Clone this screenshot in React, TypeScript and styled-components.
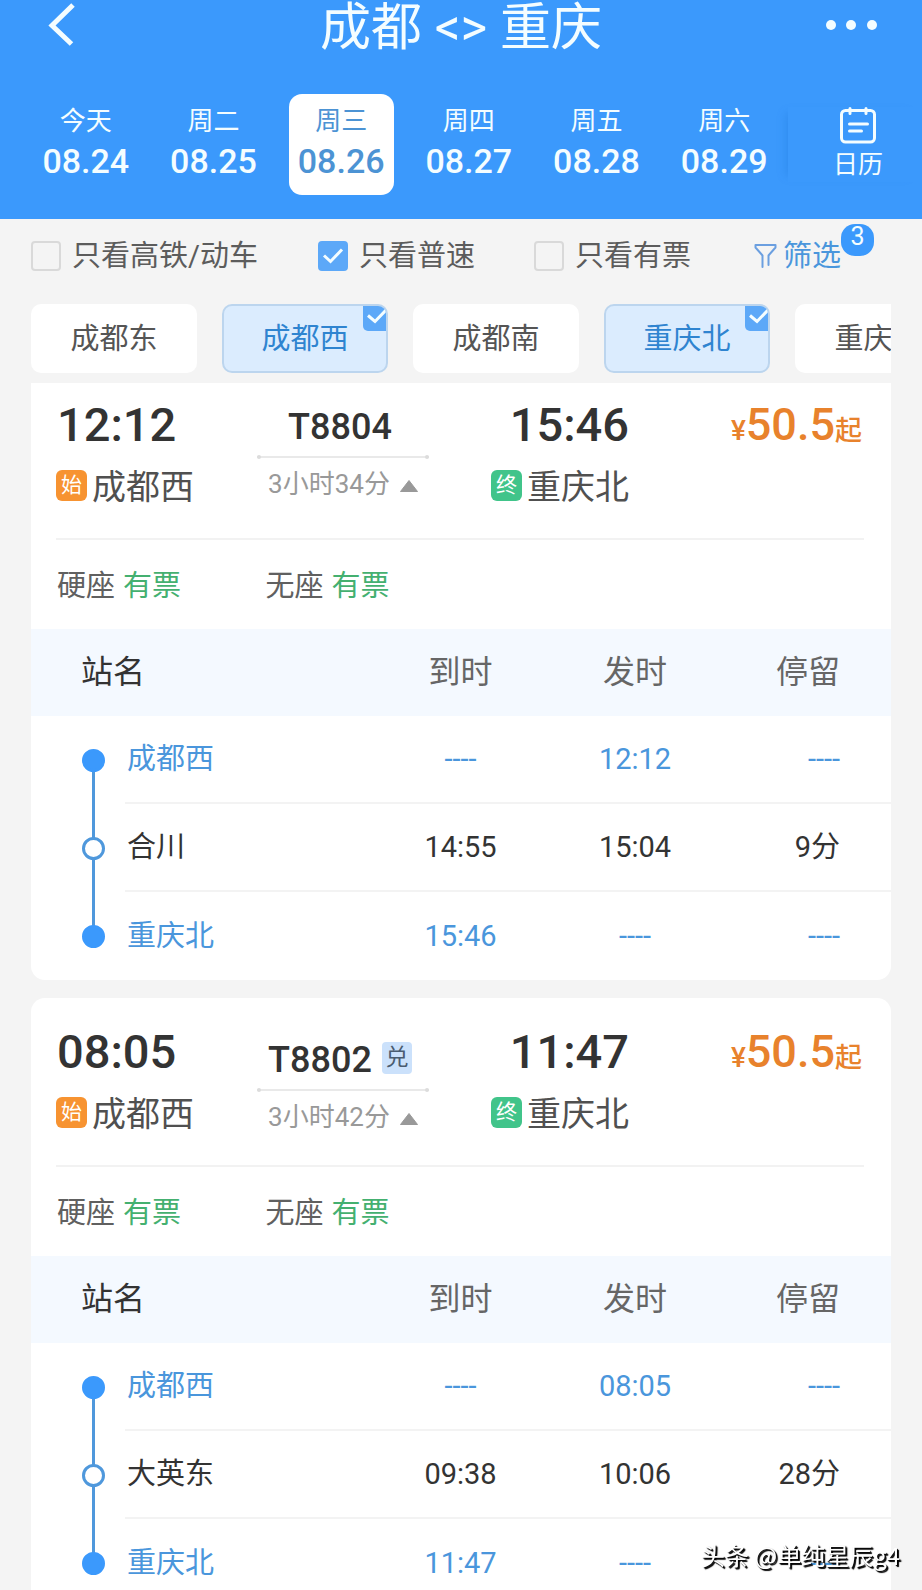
import React, { useState } from 'react';
import styled, { createGlobalStyle, css } from 'styled-components';

const BLUE = '#3b99fc';
const LINK = '#4a96dc';

const GlobalStyle = createGlobalStyle`
  * { box-sizing: border-box; }
  body {
    margin: 0;
    background: #f4f4f4;
    color: #333;
    font-family: Roboto, "Noto Sans CJK SC", sans-serif;
  }
  button {
    margin: 0;
    padding: 0;
    border: 0;
    background: none;
    color: inherit;
    font: inherit;
    cursor: pointer;
  }
`;

const Screen = styled.div`
  height: 100vh;
  display: flex;
  flex-direction: column;
  overflow: hidden;
`;

const Header = styled.header`
  flex: none;
  background: ${BLUE};
  color: #f4fdff;
  padding-bottom: 24px;
`;

const TitleBar = styled.div`
  display: grid;
  grid-template-columns: 100px 1fr 100px;
  align-items: start;
  margin-bottom: 38px;
`;

const Title = styled.h1`
  margin: 0;
  font-size: 51px;
  line-height: 56px;
  font-weight: 400;
  text-align: center;
`;

const BackButton = styled.button`
  height: 50px;
  padding-left: 48px;
  svg { display: block; }
`;

const MoreButton = styled.button`
  height: 50px;
  svg { display: block; }
`;

const DateBar = styled.nav`
  display: flex;
  align-items: stretch;
  height: 101px;
  padding-left: 22px;
`;

const Days = styled.div`
  flex: 1;
  display: grid;
  grid-template-columns: repeat(6, 1fr);
  justify-items: center;
`;

const Day = styled.button<{ $active: boolean }>`
  width: 105px;
  padding: 10px 0 0;
  display: flex;
  flex-direction: column;
  align-items: center;
  gap: 1px;
  border-radius: 13px;
  ${(p) => p.$active && css`background: #fff; color: #4c93d4;`}
`;

const Weekday = styled.span`
  font-size: 26px;
  line-height: 34px;
`;

const DateText = styled.span`
  font-size: 34px;
  line-height: 44px;
  font-weight: 500;
`;

const Calendar = styled.button`
  width: 134px;
  margin: 13px 0 13px;
  padding-left: 6px;
  display: flex;
  flex-direction: column;
  align-items: center;
  gap: 4px;
  font-size: 25px;
  line-height: 34px;
  box-shadow: -8px 0 8px -6px rgba(30, 120, 220, 0.35);
`;

const Filters = styled.div`
  flex: none;
  display: grid;
  grid-template-columns: 287fr 216fr 220fr 168fr;
  align-items: center;
  height: 73px;
  padding-left: 31px;
  font-size: 29px;
  line-height: 36px;
  color: #5c5c5c;
`;

const CheckLabel = styled.label`
  display: flex;
  align-items: center;
  gap: 11px;
`;

const BoxWrap = styled.span`
  display: grid;
  > * { grid-area: 1 / 1; }
  svg { pointer-events: none; }
`;

const Box = styled.input`
  appearance: none;
  width: 30px;
  height: 30px;
  margin: 0;
  border: 2px solid #d9d9d9;
  border-radius: 4px;
  &:checked { background: #5ca8f8; border-color: #5ca8f8; }
`;

const FilterButton = styled.button`
  justify-self: start;
  position: relative;
  display: flex;
  align-items: center;
  gap: 6px;
  color: ${LINK};
`;

const Count = styled.span`
  position: absolute;
  left: 100%;
  top: -14px;
  width: 33px;
  height: 32px;
  border-radius: 14px;
  background: ${BLUE};
  color: #f4fdff;
  font-size: 25px;
  line-height: 26px;
  text-align: center;
`;

const Chips = styled.div`
  flex: none;
  display: flex;
  gap: 25px;
  margin: 12px 31px 10px;
  overflow: hidden;
`;

const Chip = styled.button<{ $active: boolean }>`
  position: relative;
  flex: none;
  width: 166px;
  height: 69px;
  border-radius: 10px;
  background: #fff;
  color: #555;
  font-size: 29px;
  line-height: 36px;
  overflow: hidden;
  ${(p) => p.$active && css`
    background: #dbecfe;
    border: 2px solid #bcd5ee;
    color: #2f84d0;
  `}
`;

const Corner = styled.svg`
  position: absolute;
  top: 0;
  right: 0;
  background: #5ca8f8;
  border-radius: 0 0 0 5px;
`;

const List = styled.main`
  flex: 1;
  min-height: 0;
  padding: 0 31px;
  overflow-y: auto;
  scrollbar-width: none;
`;

const Card = styled.article<{ $flush: boolean }>`
  background: #fff;
  border-radius: ${(p) => (p.$flush ? '0 0 14px 14px' : '14px')};
  padding-top: ${(p) => (p.$flush ? 19 : 31)}px;
  margin-bottom: 18px;
  overflow: hidden;
`;

const Summary = styled.div`
  display: grid;
  grid-template-columns: 201fr 172fr 200fr 235fr;
  margin: 0 27px 0 25px;
  padding-bottom: 34px;
  border-bottom: 2px solid #f2f2f2;
`;

const Endpoint = styled.div<{ $end?: boolean }>`
  display: flex;
  flex-direction: column;
  align-items: ${(p) => (p.$end ? 'flex-end' : 'flex-start')};
  gap: 20px;
`;

const Time = styled.time`
  padding-left: 1px;
  font-size: 47px;
  line-height: 46px;
  height: 48px;
  font-weight: 500;
`;

const Station = styled.div`
  display: flex;
  align-items: flex-start;
  gap: 5px;
  font-size: 34px;
  line-height: 34px;
  color: #505050;
`;

const Tag = styled.span<{ $color: string }>`
  width: 31px;
  height: 31px;
  border-radius: 6px;
  background: ${(p) => p.$color};
  color: #fff;
  font-size: 21px;
  line-height: 30px;
  text-align: center;
`;

const Train = styled.div`
  padding-top: 7px;
  display: flex;
  flex-direction: column;
  align-items: center;
`;

const TrainNo = styled.div`
  display: flex;
  align-items: flex-end;
  gap: 10px;
  padding-right: 6px;
  font-size: 36px;
  line-height: 36px;
  font-weight: 500;
`;

const Exchange = styled.span`
  width: 30px;
  height: 32px;
  margin: 6px 0 4px;
  border-radius: 4px;
  background: #cbe1fb;
  color: #4a5c70;
  font-size: 23px;
  line-height: 32px;
  font-weight: 400;
  text-align: center;
`;

const Track = styled.div`
  position: relative;
  width: 100%;
  height: 2px;
  margin: 11px 0 13px;
  background: #e9e9e9;
  &::before, &::after {
    content: "";
    position: absolute;
    top: -1px;
    width: 4px;
    height: 4px;
    border-radius: 50%;
    background: #dcdcdc;
  }
  &::before { left: 0; }
  &::after { right: 0; }
`;

const Duration = styled.button`
  display: flex;
  align-items: center;
  gap: 10px;
  font-size: 26px;
  line-height: 26px;
  color: #999;
  svg { margin-top: 4px; }
`;

const Price = styled.div`
  display: flex;
  justify-content: flex-end;
  align-items: baseline;
  height: 48px;
  padding-right: 2px;
  line-height: 45px;
  font-size: 28px;
  font-weight: 500;
  color: #e8822c;
`;

const Amount = styled.span`
  font-size: 45px;
`;

const From = styled.span`
  font-size: 27px;
`;

const Seats = styled.div`
  display: grid;
  grid-template-columns: repeat(4, 1fr);
  align-items: center;
  height: 89px;
  padding-top: 2px;
  margin: 0 0 0 26px;
  font-size: 29px;
  line-height: 36px;
  color: #606060;
`;

const Seat = styled.span`
  display: flex;
  gap: 8px;
`;

const Left = styled.span`
  color: #44b070;
`;

const Stops = styled.table`
  width: 100%;
  table-layout: fixed;
  border-collapse: separate;
  border-spacing: 0;
  line-height: 36px;
  th, td { padding: 0; text-align: center; font-weight: 400; }
  th:last-child, td:last-child { padding-right: 51px; text-align: right; }
`;

const Col = styled.col<{ $w?: number }>`
  ${(p) => p.$w && css`width: ${p.$w}px;`}
`;

const HeadCell = styled.th<{ $first?: boolean }>`
  height: 87px;
  background: #f4f9ff;
  color: #666;
  font-size: 32px;
  && {
    padding-bottom: 2px;
    ${(p) => p.$first && css`padding-left: 50px; text-align: left; color: #333;`}
  }
`;

const StopRow = styled.tr<{ $blue: boolean }>`
  color: ${(p) => (p.$blue ? LINK : '#333')};
  font-size: 29px;
  td, th { height: 88px; border-bottom: 2px solid #f3f3f3; }
  td:first-child { border-bottom: 0; }
  &:last-child td, &:last-child th { border-bottom: 0; }
`;

const StopName = styled.th`
  && { text-align: left; padding-left: 2px; }
`;

const DotCell = styled.td<{ $pos: 'first' | 'mid' | 'last' }>`
  position: relative;
  &::before {
    content: "";
    position: absolute;
    left: 61px;
    width: 3px;
    top: ${(p) => (p.$pos === 'first' ? '50%' : '0')};
    bottom: ${(p) => (p.$pos === 'last' ? '50%' : '0')};
    background: #4f98dc;
  }
`;

const Dot = styled.span<{ $hollow: boolean }>`
  position: relative;
  display: block;
  width: 23px;
  height: 23px;
  margin-left: 51px;
  border-radius: 50%;
  border: 3px solid ${(p) => (p.$hollow ? '#4f98dc' : BLUE)};
  background: ${(p) => (p.$hollow ? '#fff' : BLUE)};
`;

const Watermark = styled.div`
  position: fixed;
  right: 22px;
  bottom: 18px;
  font-family: "Noto Sans CJK SC", sans-serif;
  font-size: 24px;
  line-height: 34px;
  color: #fff;
  text-shadow: 1px 1px 1px #000, 2px 2px 1px #000;
`;

const Tick = ({ size }: { size: number }) => (
  <svg width={size} height={size} viewBox="0 0 30 30" fill="none" stroke="#f4fdff" strokeWidth="3" aria-hidden>
    <path d="M6 14.5l6.500 6L24 8.500" />
  </svg>
);

const days = [
  ['今天', '08.24'],
  ['周二', '08.25'],
  ['周三', '08.26'],
  ['周四', '08.27'],
  ['周五', '08.28'],
  ['周六', '08.29'],
];

type Stop = [name: string, arrive: string, depart: string, stay: string];
type Trip = {
  no: string;
  exchange?: boolean;
  depart: string;
  arrive: string;
  duration: string;
  stops: Stop[];
};

const NONE = '----';
const trips: Trip[] = [
  {
    no: 'T8804',
    depart: '12:12',
    arrive: '15:46',
    duration: '3小时34分',
    stops: [
      ['成都西', NONE, '12:12', NONE],
      ['合川', '14:55', '15:04', '9分'],
      ['重庆北', '15:46', NONE, NONE],
    ],
  },
  {
    no: 'T8802',
    exchange: true,
    depart: '08:05',
    arrive: '11:47',
    duration: '3小时42分',
    stops: [
      ['成都西', NONE, '08:05', NONE],
      ['大英东', '09:38', '10:06', '28分'],
      ['重庆北', '11:47', NONE, NONE],
    ],
  },
];

function Check({ label, initial = false }: { label: string; initial?: boolean }) {
  const [on, setOn] = useState(initial);
  return (
    <CheckLabel>
      <BoxWrap>
        <Box type="checkbox" checked={on} onChange={() => setOn(!on)} />
        {on && <Tick size={30} />}
      </BoxWrap>
      {label}
    </CheckLabel>
  );
}

function StationChip({ label, initial = false }: { label: string; initial?: boolean }) {
  const [on, setOn] = useState(initial);
  return (
    <Chip $active={on} aria-pressed={on} onClick={() => setOn(!on)}>
      {label}
      {on && (
        <Corner width="23" height="25" viewBox="0 0 23 25" fill="none" stroke="#f4fdff" strokeWidth="3" aria-hidden>
          <path d="M5 9.500l7 6L23 4" />
        </Corner>
      )}
    </Chip>
  );
}

function TripCard({ trip, flush }: { trip: Trip; flush: boolean }) {
  const last = trip.stops.length - 1;
  return (
    <Card $flush={flush}>
      <Summary>
        <Endpoint>
          <Time>{trip.depart}</Time>
          <Station><Tag $color="#f79331">始</Tag>成都西</Station>
        </Endpoint>
        <Train>
          <TrainNo>
            {trip.no}
            {trip.exchange && <Exchange>兑</Exchange>}
          </TrainNo>
          <Track />
          <Duration aria-expanded="true">
            {trip.duration}
            <svg width="18" height="12" viewBox="0 0 18 12" aria-hidden>
              <path d="M9 0.500L17.500 11.500H0.500Z" fill="#999" stroke="#999" strokeLinejoin="round" />
            </svg>
          </Duration>
        </Train>
        <Endpoint $end>
          <Time>{trip.arrive}</Time>
          <Station><Tag $color="#41c48a">终</Tag>重庆北</Station>
        </Endpoint>
        <Price>¥<Amount>50.5</Amount><From>起</From></Price>
      </Summary>
      <Seats>
        <Seat>硬座<Left>有票</Left></Seat>
        <Seat>无座<Left>有票</Left></Seat>
      </Seats>
      <Stops>
        <colgroup>
          <Col $w={94} />
          <Col />
          <Col $w={175} />
          <Col $w={174} />
          <Col $w={169} />
        </colgroup>
        <thead>
          <tr>
            <HeadCell $first colSpan={2}>站名</HeadCell>
            <HeadCell>到时</HeadCell>
            <HeadCell>发时</HeadCell>
            <HeadCell>停留</HeadCell>
          </tr>
        </thead>
        <tbody>
          {trip.stops.map(([name, arrive, depart, stay], i) => {
            const end = i === 0 || i === last;
            return (
              <StopRow key={name} $blue={end}>
                <DotCell $pos={i === 0 ? 'first' : i === last ? 'last' : 'mid'}>
                  <Dot $hollow={!end} />
                </DotCell>
                <StopName scope="row">{name}</StopName>
                <td>{arrive}</td>
                <td>{depart}</td>
                <td>{stay}</td>
              </StopRow>
            );
          })}
        </tbody>
      </Stops>
    </Card>
  );
}

export default function App() {
  const [day, setDay] = useState('08.26');
  return (
    <Screen>
      <GlobalStyle />
      <Header>
        <TitleBar>
          <BackButton aria-label="返回">
            <svg width="30" height="44" viewBox="0 0 30 44" fill="none" stroke="#f4fdff" strokeWidth="5">
              <path d="M25 2L4 22.500L23.500 41" />
            </svg>
          </BackButton>
          <Title>成都 &lt;&gt; 重庆</Title>
          <MoreButton aria-label="更多">
            <svg width="60" height="12" viewBox="0 0 60 12" fill="#f4fdff">
              <circle cx="9" cy="6" r="5" />
              <circle cx="29" cy="6" r="5" />
              <circle cx="50" cy="6" r="5" />
            </svg>
          </MoreButton>
        </TitleBar>
        <DateBar>
          <Days>
            {days.map(([week, date]) => (
              <Day key={date} $active={date === day} onClick={() => setDay(date)}>
                <Weekday>{week}</Weekday>
                <DateText>{date}</DateText>
              </Day>
            ))}
          </Days>
          <Calendar>
            <svg width="38" height="37" viewBox="0 0 38 37" fill="none" stroke="#f4fdff" strokeWidth="3" strokeLinecap="round">
              <rect x="2.500" y="3.500" width="33" height="31.500" rx="4" />
              <path d="M11 1.500v5M27 1.500v5M10.500 17h18M10.500 24h12" />
            </svg>
            日历
          </Calendar>
        </DateBar>
      </Header>
      <Filters>
        <Check label="只看高铁/动车" />
        <Check label="只看普速" initial />
        <Check label="只看有票" />
        <FilterButton>
          <svg width="23" height="26" viewBox="0 0 23 26" fill="none" stroke="#6b9fe0" strokeWidth="2" strokeLinejoin="round" strokeLinecap="round" aria-hidden>
            <path d="M8.500 24V12.500L1.500 4.500V2H21.500V4.500L14.500 12.500V22" />
          </svg>
          筛选
          <Count>3</Count>
        </FilterButton>
      </Filters>
      <Chips>
        <StationChip label="成都东" />
        <StationChip label="成都西" initial />
        <StationChip label="成都南" />
        <StationChip label="重庆北" initial />
        <StationChip label="重庆西" />
      </Chips>
      <List>
        {trips.map((trip, i) => (
          <TripCard key={trip.no} trip={trip} flush={i === 0} />
        ))}
      </List>
      <Watermark>头条 @单纯星辰g4</Watermark>
    </Screen>
  );
}
